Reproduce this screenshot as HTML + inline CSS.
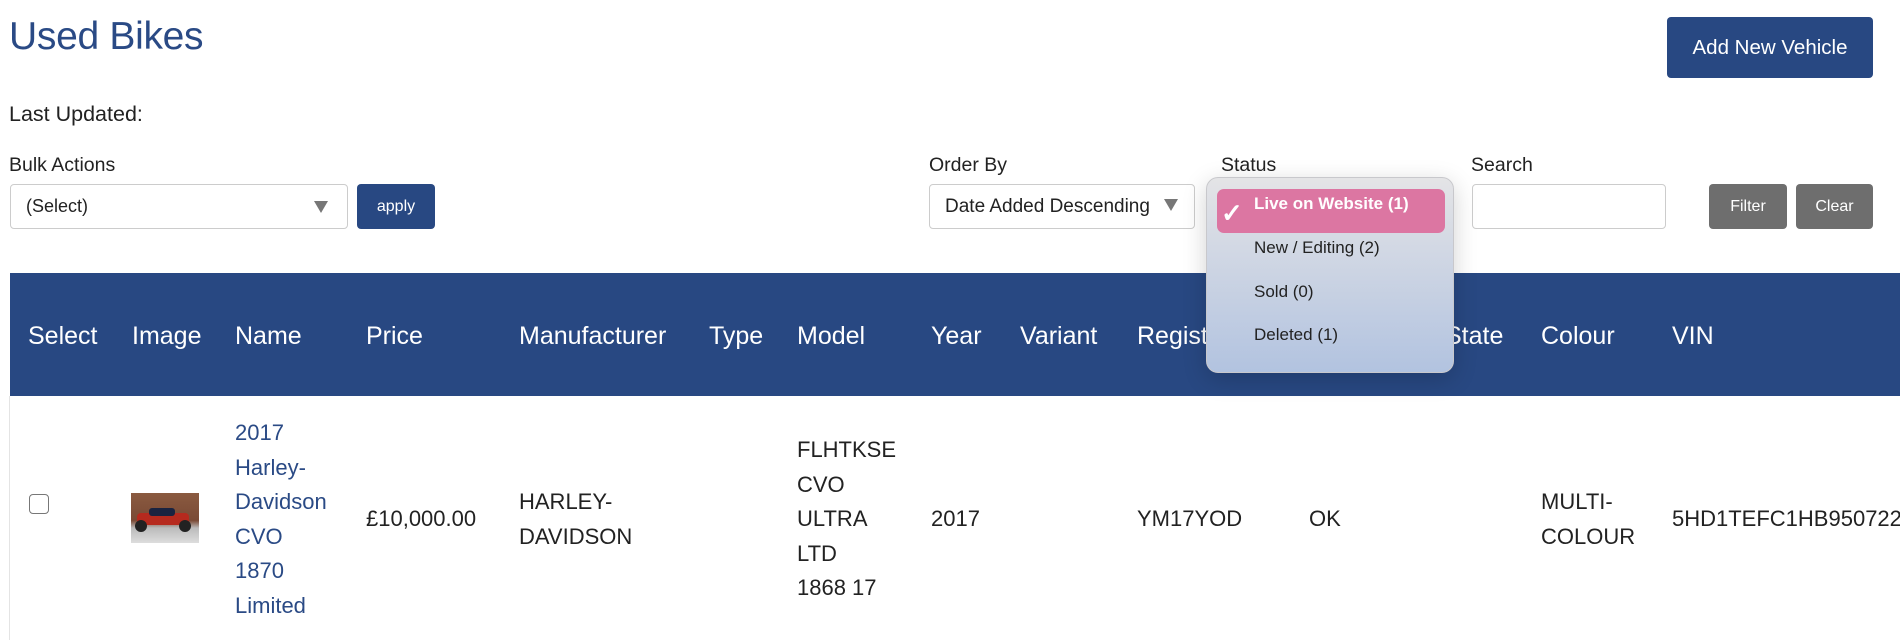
<!DOCTYPE html>
<html><head><meta charset="utf-8"><style>
*{margin:0;padding:0;box-sizing:border-box}
body{width:1900px;height:640px;overflow:hidden;background:#fff;font-family:"Liberation Sans",sans-serif;color:#222;position:relative}
.a{position:absolute;white-space:nowrap}
.btn{position:absolute;border-radius:4px;color:#fff;display:flex;align-items:center;justify-content:center}
.inp{position:absolute;border:1px solid #ccc;border-radius:4px;background:#fff;font-size:18px;display:flex;align-items:center;padding-left:15px}
.tri{position:absolute;width:0;height:0;border-left:7px solid transparent;border-right:7px solid transparent;border-top:12px solid #777}
.h{position:absolute;top:322px;color:#fff;font-size:25px;white-space:nowrap}
.c{position:absolute;font-size:22px;line-height:34.5px;white-space:nowrap}
</style></head><body>
<div class="a" style="left:9px;top:15px;font-size:39px;color:#2a4a85;letter-spacing:-0.3px">Used Bikes</div>
<div class="btn" style="left:1667px;top:17px;width:206px;height:61px;background:#284882;font-size:20.5px">Add New Vehicle</div>
<div class="a" style="left:9px;top:102px;font-size:21.5px">Last Updated:</div>

<div class="a" style="left:9px;top:154px;font-size:19.5px">Bulk Actions</div>
<div class="inp" style="left:10px;top:184px;width:338px;height:45px">(Select)</div>
<div class="tri" style="left:314px;top:201px"></div>
<div class="btn" style="left:357px;top:184px;width:78px;height:45px;background:#284882;font-size:16px">apply</div>

<div class="a" style="left:929px;top:154px;font-size:19.5px">Order By</div>
<div class="inp" style="left:929px;top:184px;width:266px;height:45px;font-size:19px">Date Added Descending</div>
<div class="tri" style="left:1164px;top:199px"></div>

<div class="a" style="left:1221px;top:154px;font-size:19.5px">Status</div>

<div class="a" style="left:1471px;top:154px;font-size:19.5px">Search</div>
<div class="inp" style="left:1472px;top:184px;width:194px;height:45px"></div>
<div class="btn" style="left:1709px;top:184px;width:78px;height:45px;background:#6e6e6e;font-size:16px">Filter</div>
<div class="btn" style="left:1796px;top:184px;width:77px;height:45px;background:#6e6e6e;font-size:16px">Clear</div>

<div style="position:absolute;left:10px;top:273px;width:1890px;height:123px;background:#284882"></div>
<div style="position:absolute;left:9px;top:396px;width:1px;height:244px;background:#e4e4e4"></div>
<div class="h" style="left:28px">Select</div>
<div class="h" style="left:132px">Image</div>
<div class="h" style="left:235px">Name</div>
<div class="h" style="left:366px">Price</div>
<div class="h" style="left:519px">Manufacturer</div>
<div class="h" style="left:709px">Type</div>
<div class="h" style="left:797px">Model</div>
<div class="h" style="left:931px">Year</div>
<div class="h" style="left:1020px">Variant</div>
<div class="h" style="left:1137px">Registration</div>
<div class="h" style="left:1445px">State</div>
<div class="h" style="left:1541px">Colour</div>
<div class="h" style="left:1672px">VIN</div>

<div style="position:absolute;left:29px;top:494px;width:20px;height:20px;border:1.5px solid #777;border-radius:4px"></div>
<div style="position:absolute;left:131px;top:493px;width:68px;height:50px;background:linear-gradient(#8a5a40 0,#7a4a35 55%,#bbb 70%,#ddd 100%)">
<div style="position:absolute;left:6px;top:20px;width:52px;height:12px;background:#b62a1e;border-radius:4px"></div>
<div style="position:absolute;left:18px;top:15px;width:26px;height:8px;background:#1a2340;border-radius:3px"></div>
<div style="position:absolute;left:4px;top:27px;width:12px;height:12px;border-radius:50%;background:#222"></div>
<div style="position:absolute;left:48px;top:27px;width:12px;height:12px;border-radius:50%;background:#222"></div></div>

<div class="c" style="left:235px;top:416px;color:#2a4a85">2017<br>Harley-<br>Davidson<br>CVO<br>1870<br>Limited</div>
<div class="c" style="left:366px;top:502px">£10,000.00</div>
<div class="c" style="left:519px;top:485px">HARLEY-<br>DAVIDSON</div>
<div class="c" style="left:797px;top:433px">FLHTKSE<br>CVO<br>ULTRA<br>LTD<br>1868 17</div>
<div class="c" style="left:931px;top:502px">2017</div>
<div class="c" style="left:1137px;top:502px">YM17YOD</div>
<div class="c" style="left:1309px;top:502px">OK</div>
<div class="c" style="left:1541px;top:485px">MULTI-<br>COLOUR</div>
<div class="c" style="left:1672px;top:502px">5HD1TEFC1HB950722</div>

<div style="position:absolute;left:1206px;top:177px;width:248px;height:196px;border-radius:12px;background:linear-gradient(#e4e4e6,#b2c3e0);border:1px solid #c8c8cc;box-shadow:0 6px 24px rgba(0,0,0,0.18)">
<div style="position:absolute;left:10px;top:11px;width:228px;height:44px;border-radius:7px;background:#dc76a2"></div>
<div class="a" style="left:14px;top:20px;color:#fff;font-size:26px;font-weight:bold">✓</div>
<div class="a" style="left:47px;top:16px;color:#fff;font-size:17px;font-weight:bold">Live on Website (1)</div>
<div class="a" style="left:47px;top:60px;font-size:17px;color:#222">New / Editing (2)</div>
<div class="a" style="left:47px;top:104px;font-size:17px;color:#222">Sold (0)</div>
<div class="a" style="left:47px;top:147px;font-size:17px;color:#222">Deleted (1)</div>
</div>
</body></html>
